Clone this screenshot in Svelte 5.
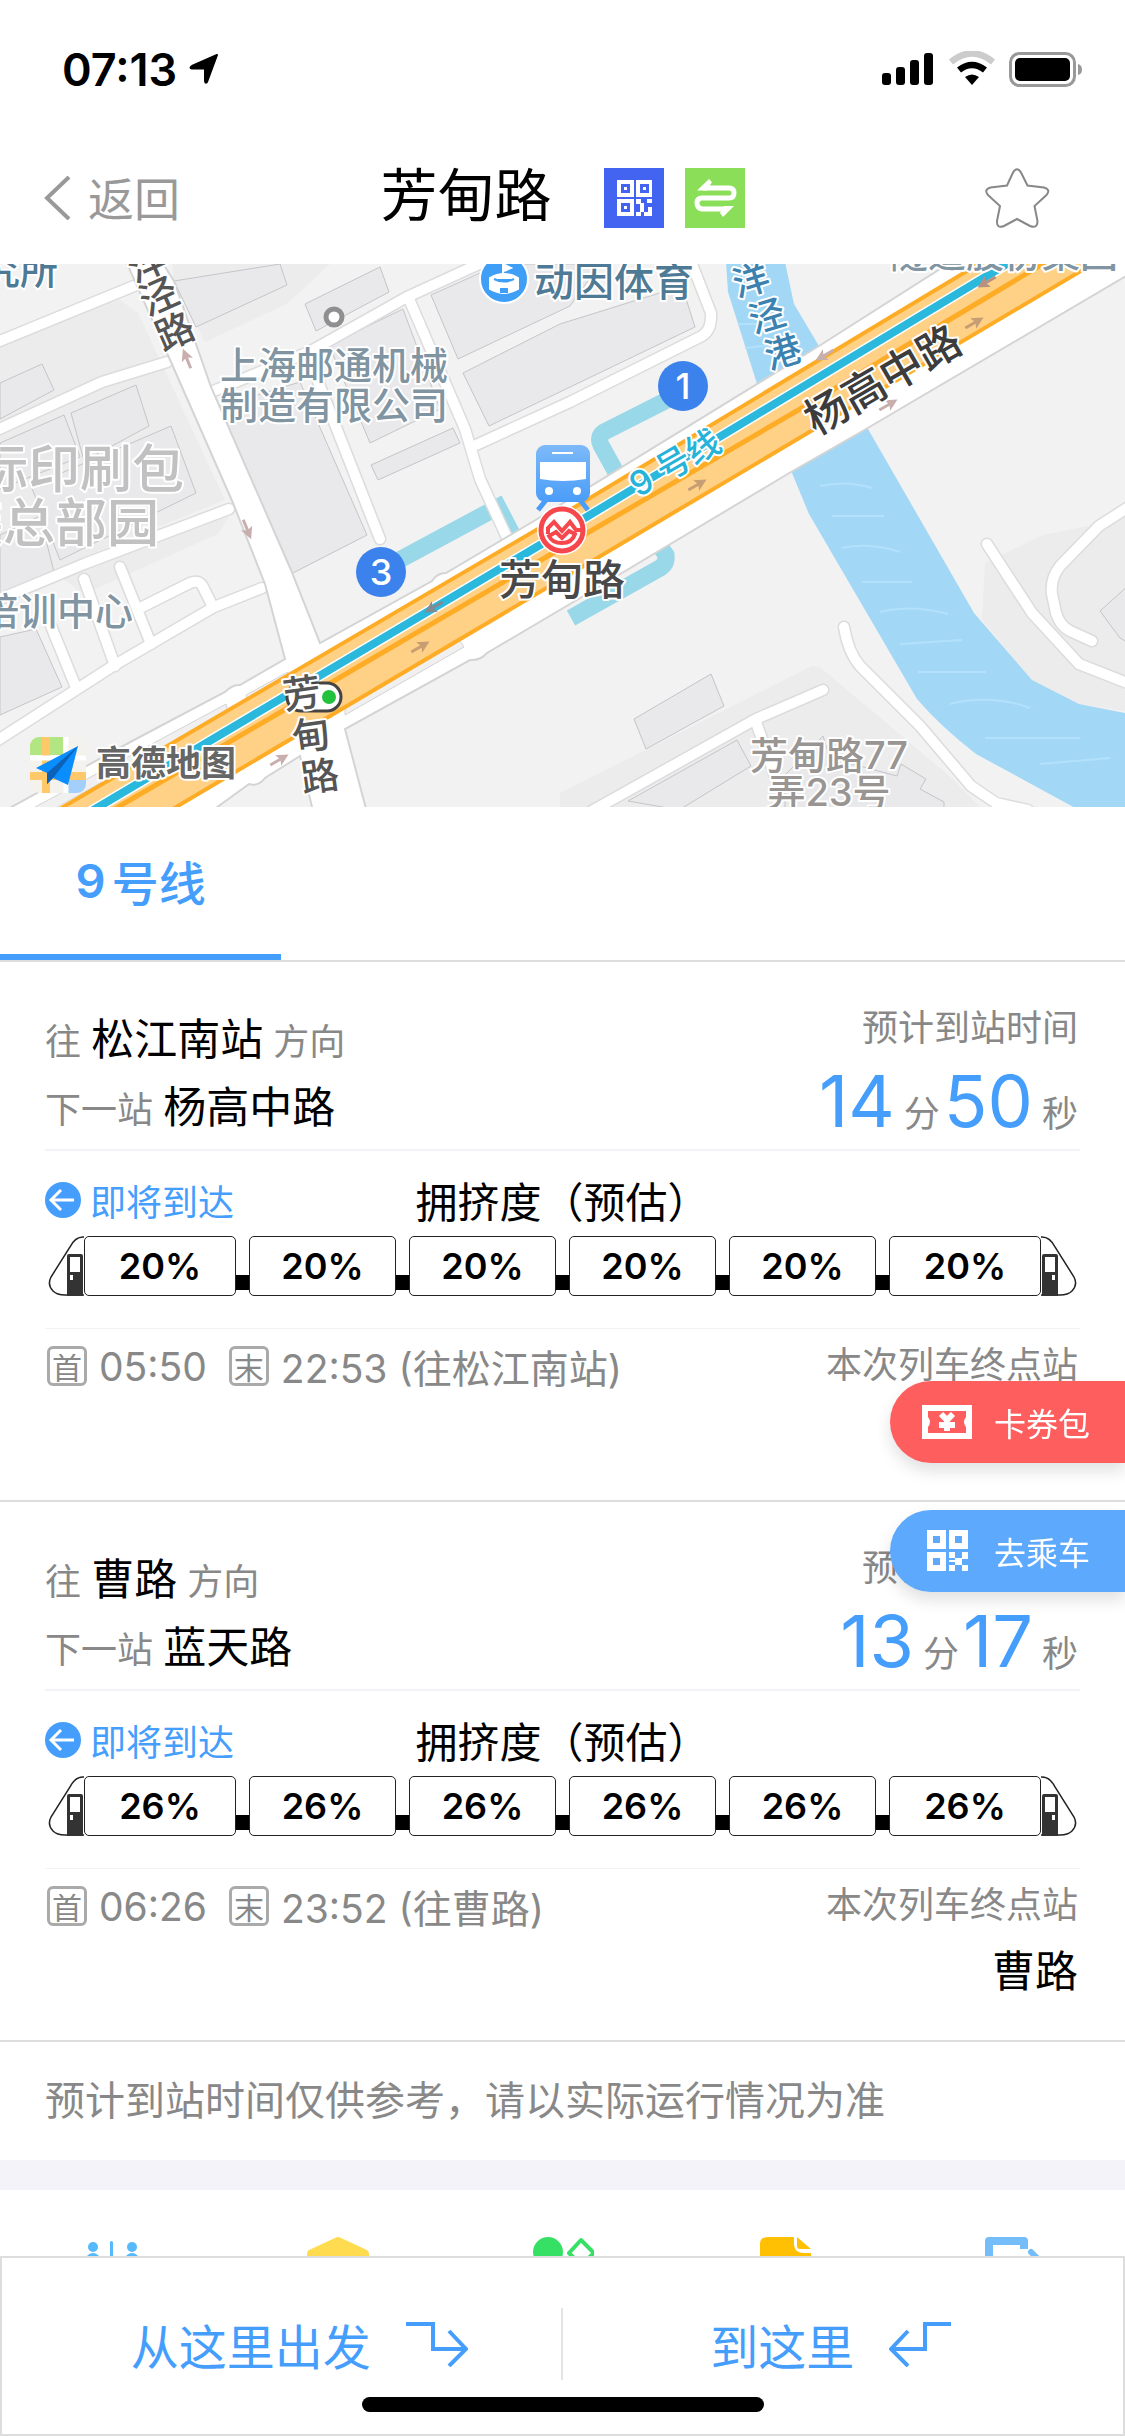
<script lang="ts">
  type Direction = {
    to: string;
    next: string;
    minutes: string;
    seconds: string;
    crowd: number[];
    first: string;
    last: string;
  };

  let starred = $state(false);
  let activeLine = $state("9");

  const lines = [{ id: "9", name: "号线" }];

  const directions: Direction[] = [
    {
      to: "松江南站",
      next: "杨高中路",
      minutes: "14",
      seconds: "50",
      crowd: [20, 20, 20, 20, 20, 20],
      first: "05:50",
      last: "22:53",
    },
    {
      to: "曹路",
      next: "蓝天路",
      minutes: "13",
      seconds: "17",
      crowd: [26, 26, 26, 26, 26, 26],
      first: "06:26",
      last: "23:52",
    },
  ];

  // map geometry, in the map's own 1125 x 543 space
  const blocks = [
    "0,72 120,36 138,49 225,236 0,327",
    "174,17 172,0 330,0 287,40 205,78",
    "60,313 229,252 218,270 84,330",
    "560,529 812,402 820,403 953,515 980,543 560,543",
    "985,299 1043,271 1093,261 1125,245 1125,447 1079,440 1032,416 982,356",
  ];

  const buildings = [
    "174,17 280,0 287,21 196,63",
    "305,40 380,3 389,28 316,67",
    "329,81 403,45 440,145 370,179",
    "371,201 453,164 460,179 378,216",
    "217,143 300,118 367,271 291,310",
    "431,31 500,0 600,0 570,42 458,95",
    "463,109 560,60 682,22 695,63 489,162",
    "0,119 42,100 54,126 0,155",
    "71,149 136,121 149,162 84,197",
    "31,222 171,162 196,229 60,296",
    "0,179 64,151 80,193 0,225",
    "0,271 40,252 54,308 0,331",
    "0,373 36,365 62,423 0,451",
    "634,455 711,410 724,442 646,485",
    "628,537 737,476 751,502 679,546",
    "823,472 785,511 785,546 944,546 944,538 920,525 926,515 901,500 897,512 830,494",
    "1100,347 1130,320 1130,380 1120,374",
  ];

  const streets = [
    "M-5 79L134 22",
    "M-5 167L102 118L167 98",
    "M-5 337L84 300L229 245",
    "M-5 478L113 402L214 343L262 324",
    "M51 362L75 421",
    "M84 315L115 402",
    "M120 303L151 380",
    "M142 343L190 319Q199 315 203 323L213 343",
    "M211 128L309 88L407 33L490 -5",
    "M316 112L380 275",
    "M409 35L465 165L480 215L509 278",
    "M476 181L570 138L702 72Q712 66 711 49L690 -5",
    "M987 280L1032 349L1079 400L1130 420",
    "M1130 242L1099 262L1060 302Q1050 315 1052 330L1056 349Q1060 362 1070 367L1092 377",
    "M844 363Q848 388 860 402L920 462L971 522L996 539L1028 546",
    "M823 426L756 455L590 548",
    "M756 458L776 515",
  ];

  const roadArrows = [
    { x: 187, y: 95, turn: -112, tone: "#c9aeae" },
    { x: 247, y: 265, turn: 68, tone: "#c9aeae" },
    { x: 434, y: 343, turn: 150, tone: "#86888f" },
    { x: 420, y: 383, turn: -30, tone: "#c79d73" },
    { x: 279, y: 496, turn: -30, tone: "#c9aeae" },
    { x: 825, y: 91, turn: 150, tone: "#c9aeae" },
    { x: 888, y: 141, turn: -30, tone: "#c9aeae" },
    { x: 697, y: 221, turn: -30, tone: "#c79d73" },
    { x: 974, y: 59, turn: -30, tone: "#c79d73" },
    { x: 987, y: 18, turn: 150, tone: "#b98f80" },
  ];

  const exits = [
    { no: 1, x: 683, y: 122 },
    { no: 3, x: 381, y: 308 },
  ];
</script>

{#snippet qr()}
  <path
    fill-rule="evenodd"
    d="M0 0H19V19H0ZM6 6V13H13V6ZM22 0H41V19H22ZM28 6V13H35V6ZM0 22H19V41H0ZM6 28V35H13V28Z"
  />
  <path d="M22 22H28V28H22ZM35 22H41V29H35ZM28 28H35V35H28ZM22 35H28V41H22ZM22 30H28V32H22ZM35 35H41V41H35Z" />
{/snippet}

{#snippet nose()}
  <svg class="nose" viewBox="0 0 36 60" aria-hidden="true">
    <path d="M36 1H35Q27 1 22 11L3 41Q-1 49 5 55Q9 59 17 59H36" fill="#fff" stroke="#222" stroke-width="1.500" />
    <path
      d="M19 60V20Q19 18 21 18H33Q35 18 35 20V60ZM22 21V36H32V21ZM22 39V44H25V39Z"
      fill="#333"
      fill-rule="evenodd"
    />
  </svg>
{/snippet}

<div class="page">
  <div class="status">
    <span class="clock">07:13</span>
    <svg class="locate" width="30" height="30" viewBox="0 0 30 30">
      <path d="M28 1L18 28Q16 30 16 26V14.500H3Q0 14 3 12Z" stroke="#000" stroke-width="2" stroke-linejoin="round" />
    </svg>
    <svg class="signals" width="202" height="36" viewBox="0 0 202 36">
      <rect x="0" y="22" width="9" height="12" rx="3" />
      <rect x="14" y="16" width="9" height="18" rx="3" />
      <rect x="28" y="9" width="9" height="25" rx="3" />
      <rect x="42" y="2" width="9" height="32" rx="3" />
      <path d="M69 11Q90 -6 111 11" fill="none" stroke="#ccc" stroke-width="6.500" />
      <path d="M77 19Q90 9 103 19" fill="none" stroke="#000" stroke-width="6.500" />
      <path d="M83 26Q90 21 97 26L90 34Z" />
      <rect x="128.500" y="2.500" width="64" height="32" rx="9" fill="none" stroke="#999" stroke-width="3" />
      <rect x="133" y="7" width="55" height="23" rx="5" />
      <path d="M196 13Q200 14 200 18.500T196 24Z" fill="#999" />
    </svg>
  </div>

  <header class="nav">
    <button class="back">
      <svg width="28" height="44" viewBox="0 0 28 44"><path d="M26 1L4 22L26 43" /></svg>
      <span>返回</span>
    </button>
    <div class="title">
      <h1>芳甸路</h1>
      <button aria-label="乘车码">
        <svg width="60" height="60" viewBox="0 0 60 60">
          <rect width="60" height="60" fill="#4264f0" />
          <g fill="#fff">
            <rect x="13" y="12" width="17" height="17" />
            <rect x="32" y="12" width="16" height="17" />
            <rect x="13" y="31" width="17" height="17" />
            <path d="M32 31h5v4h3v9h-3v4h-5v-4h4v-8h-4zM43 31h5v4h-5zM44 39h4v9h-8v-4h4z" />
          </g>
          <g fill="#fff" stroke="#4264f0" stroke-width="3">
            <rect x="18.500" y="17.500" width="6" height="6" />
            <rect x="37.500" y="17.500" width="6" height="6" />
            <rect x="18.500" y="36.500" width="6" height="6" />
          </g>
        </svg>
      </button>
      <button aria-label="换乘">
        <svg width="60" height="60" viewBox="0 0 60 60">
          <rect width="60" height="60" fill="#8ade58" />
          <path d="M18 20H44Q49 20 49 25T44 30H17Q12 30 12 35T17 41H43" fill="none" stroke="#fff" stroke-width="5" />
          <path d="M12 22.500L24 11L27 14L22 22.500ZM49 38L38 49L35 45L39 38Z" fill="#fff" />
        </svg>
      </button>
    </div>
    <button class="star" class:starred aria-label="收藏" onclick={() => (starred = !starred)}>
      <svg width="65" height="62" viewBox="-1 -1 65 62">
        <path
          d="M27 4.500Q31 -2 35 4.500L41.500 17.500L58 19.500Q65 21.500 60.500 27L48.500 38L51.500 53Q51.500 61 44 58L31 51L18 58Q10.500 61 11 53L14 38L2 27Q-2.500 21.500 4.500 19.500L21 17.500Z"
        />
      </svg>
    </button>
  </header>

  <svg class="map" viewBox="0 0 1125 543" preserveAspectRatio="xMidYMid slice" role="img" aria-label="芳甸路站周边地图">
    <defs>
      <linearGradient id="bus" x1="0" y1="0" x2="0" y2="1">
        <stop offset="0" stop-color="#7db9f8" />
        <stop offset="1" stop-color="#4a9df8" />
      </linearGradient>
    </defs>

    <rect width="1125" height="543" fill="#f2f2f2" />
    {#each blocks as points}
      <polygon {points} fill="#edecec" />
    {/each}
    {#each buildings as points}
      <polygon {points} fill="#e9e9eb" stroke="#c4c5c8" />
    {/each}

    <path
      fill="#a2d8f6"
      d="M726 -2L728 28L758 123L792 209L809 250L917 435Q940 462 976 490L1079 546H1125V449L1079 440L1032 416L974 349L868 165L819 82L794 40L785 -2Z"
    />
    <g fill="none" stroke="#b3e0fb" stroke-width="2">
      <path d="M738 60H766M745 84L784 80M820 222Q846 216 872 224M832 252H884M842 284Q870 278 900 288" />
      <path d="M862 318H912M880 348Q912 340 948 350M900 380L962 376M918 408H986M950 440Q990 430 1030 444M985 474H1080M1040 500L1110 494" />
    </g>

    <g fill="none" stroke="#98d8e8" stroke-width="17">
      <path d="M390 301L498 243L512 270" />
      <path d="M675 132L604 168Q597 173 601 181L618 212" />
      <path d="M650 268L666 291Q667 300 660 304L571 354" />
    </g>

    <g class="road-edge">
      {#each streets as d}
        <path {d} />
      {/each}
    </g>
    <g class="road">
      {#each streets as d}
        <path {d} />
      {/each}
    </g>

    <path
      d="M-5 552L134 476L225 428Q233 420 240 421L285 395L265 320L233 239L171 98L125 -5H160L174 17L211 123L291 306L320 379L432 317Q437 309 446 309L534 257L819 82L951 -2H1150L866 165L791 208L570 340L487 389Q480 397 470 396L345 465L370 560H316L300 492L265 514Q258 523 249 520L205 552Z"
      fill="#fff"
      stroke="#d4d4d4"
      stroke-width="2"
    />
    <path d="M246 431L288 408L288 414L248 438ZM345 443L460 377L464 383L345 451ZM0 562L226 440L228 448L34 556Z" fill="#f0f0f0" stroke="#d4d4d4" />

    <path d="M58 546L560 252L982 -2H1093L582 303L171 546Z" fill="#fed186" />
    <g fill="none" stroke="#feac26" stroke-width="4">
      <path d="M58 546L560 252L982 -2M171 546L582 303L1096 -2" />
      <path d="M113 546L291 442L589 268L819 134L949 56L1046 -2" stroke-width="5" />
    </g>
    <path d="M90 548L540 281L1010 -2" fill="none" stroke="#fff" stroke-width="11" />
    <path d="M90 548L540 281L1010 -2" fill="none" stroke="#2ab8dc" stroke-width="8" />

    {#each roadArrows as arrow}
      <path
        d="M-10 -1.500H1L-1 -6L11 0L-1 6L1 1.500H-10Z"
        fill={arrow.tone}
        transform="translate({arrow.x} {arrow.y}) rotate({arrow.turn})"
      />
    {/each}

    <circle cx="334" cy="53" r="8" fill="#fff" stroke="#8f8f8f" stroke-width="5" />
    <rect x="287" y="419" width="54" height="28" rx="14" fill="#fff" stroke="#444" stroke-width="3" />
    <circle cx="329" cy="433" r="7" fill="#22c23c" />

    <circle cx="504" cy="15" r="24" fill="#3f9ef5" stroke="#fff" stroke-width="2" />
    <path
      d="M490 14Q504 6 518 14V25Q504 33 490 25ZM503 10V0L511 4L504 7"
      fill="#fff"
      stroke="#fff"
      stroke-width="2"
    />
    <path d="M494 15Q504 20 514 15M501 29V25H507V29" fill="#3f9ef5" stroke="#3f9ef5" stroke-width="2" />

    <g class="labels">
      <text x="58" y="20" class="poi deep end">究所</text>
      <text x="334" y="115" class="poi mid">上海邮通机械</text>
      <text x="334" y="155" class="poi mid">制造有限公司</text>
      <text x="184" y="224" class="area end">标印刷包</text>
      <text x="159" y="278" class="area end">装总部园</text>
      <text x="133" y="361" class="poi end">培训中心</text>
      <text x="614" y="32" class="sport mid">动因体育</text>
      <text x="1004" y="3" class="poi mid">隧道股份集团</text>
      <text x="829" y="505" class="estate mid">芳甸路77</text>
      <text x="829" y="542" class="estate mid">弄23号</text>

      <g class="street">
        <text transform="translate(147 0) rotate(-24)" y="13">洋</text>
        <text transform="translate(159 33) rotate(-24)" y="13">泾</text>
        <text transform="translate(175 68) rotate(-24)" y="13">路</text>
        <text transform="translate(302 430) rotate(-8)" y="13">芳</text>
        <text transform="translate(311 472) rotate(-8)" y="13">甸</text>
        <text transform="translate(320 513) rotate(-8)" y="13">路</text>
      </g>
      <g class="canal">
        <text transform="translate(751 16) rotate(-17)" y="13">洋</text>
        <text transform="translate(767 52) rotate(-17)" y="13">泾</text>
        <text transform="translate(783 88) rotate(-17)" y="13">港</text>
      </g>
      <text class="avenue" transform="translate(883 116) rotate(-30)" y="15">杨高中路</text>
      <text class="metro-line" transform="translate(675 199) rotate(-30)" y="12">9 号线</text>
    </g>

    <path d="M546 236L538 246M580 236L588 246" stroke="#4a9df8" stroke-width="5" />
    <rect x="536" y="181" width="54" height="57" rx="9" fill="url(#bus)" />
    <path d="M552 189H573" stroke="#fff" stroke-width="2" />
    <path d="M540 198H586V215Q563 219 540 215Z" fill="#fff" />
    <circle cx="549" cy="227" r="4" fill="#fff" />
    <circle cx="577" cy="227" r="4" fill="#fff" />

    <circle cx="562" cy="266" r="25" fill="#fff" />
    <circle cx="562" cy="266" r="21" fill="none" stroke="#f5474c" stroke-width="5" />
    <path
      d="M548 270V264L554 258L562 267L570 258L576 266H582M575 270Q572 279 562 279Q552 279 549 272L556 268L562 274L569 267Z"
      fill="none"
      stroke="#f5474c"
      stroke-width="4"
    />
    <text x="562" y="331" class="station">芳甸路</text>

    {#each exits as exit}
      <circle cx={exit.x} cy={exit.y} r="25" fill="#3c82ec" />
      <text x={exit.x} y={exit.y + 13} class="exit">{exit.no}</text>
    {/each}

    <g>
      <clipPath id="amap"><rect x="30" y="473" width="56" height="56" rx="9" /></clipPath>
      <g clip-path="url(#amap)">
        <rect x="30" y="473" width="56" height="56" fill="#f4f2ec" />
        <path d="M30 473H63V491H30Z" fill="#b2e683" />
        <path d="M68 513H86V529H68Z" fill="#a3cffa" />
        <path d="M46 473V529M30 512H86" stroke="#ffc96a" stroke-width="8" />
        <path d="M30 494H86M66 473V529" stroke="#fff" stroke-width="5" />
      </g>
      <path d="M78 482L36 504L47 509V520L53 514L68 521Z" fill="#0a8dff" />
      <path d="M78 482L47 509V520L53 514Z" fill="#0b62b8" />
      <text x="96" y="512" class="brand">高德地图</text>
    </g>
  </svg>

  <nav class="tabs">
    {#each lines as line}
      <button class:active={activeLine === line.id} onclick={() => (activeLine = line.id)}>
        <span>{line.id}</span>{line.name}
      </button>
    {/each}
  </nav>

  {#each directions as dir}
    <section class="direction">
      <div class="head">
        <div class="route">
          <p>往 <strong>{dir.to}</strong> 方向</p>
          <p>下一站 <strong>{dir.next}</strong></p>
        </div>
        <div class="eta">
          <p>预计到站时间</p>
          <p class="countdown"><b>{dir.minutes}</b><span>分</span><b>{dir.seconds}</b><span>秒</span></p>
        </div>
      </div>

      <div class="crowd">
        <div class="crowd-title">
          <span class="arriving">
            <svg width="36" height="36" viewBox="0 0 36 36">
              <circle cx="18" cy="18" r="18" fill="#459efc" />
              <path d="M29 18H6M16 8L6 18L16 28" />
            </svg>
            即将到达
          </span>
          <h2>拥挤度（预估）</h2>
        </div>
        <div class="train">
          {@render nose()}
          {#each dir.crowd as load, i}
            {#if i > 0}<i class="coupler"></i>{/if}
            <span class="car">{load}%</span>
          {/each}
          <span class="tail">{@render nose()}</span>
        </div>
      </div>

      <div class="foot">
        <p class="times">
          <span class="badge first">首</span>
          <span>{dir.first}</span>
          <span class="badge last">末</span>
          <span>{dir.last} (往{dir.to})</span>
        </p>
        <div class="terminal">
          <p>本次列车终点站</p>
          <strong>{dir.to}</strong>
        </div>
      </div>
    </section>
  {/each}

  <p class="notice">预计到站时间仅供参考，请以实际运行情况为准</p>

  <div class="facilities">
    <svg viewBox="0 0 62 62" fill="#56b9fb">
      <circle cx="11" cy="10" r="5" /><circle cx="50" cy="10" r="5" />
      <path d="M4 20Q11 12 18 20V40H4ZM43 20Q50 12 57 20V40H43ZM28 5Q29 3 31 5V58H28Z" />
    </svg>
    <svg viewBox="0 0 62 62" fill="#ffdb50">
      <path d="M28 1Q31 -1 34 1L60 13Q62 14 62 17V58H0V17Q0 14 2 13Z" />
    </svg>
    <svg viewBox="0 0 62 62" fill="#36e065">
      <circle cx="16" cy="15" r="15" />
      <path d="M49 3L62 16L49 28L37 16Z" fill="none" stroke="#36e065" stroke-width="4" stroke-linejoin="round" />
    </svg>
    <svg viewBox="0 0 62 62" fill="#ffc003">
      <path d="M3 7Q3 0 11 0H37V8Q38 16 47 16H54V60H3Z" />
      <path d="M40 0L54 12H43Q40 12 40 9Z" />
    </svg>
    <svg viewBox="0 0 62 62" fill="none" stroke="#74bdf9" stroke-width="8">
      <path d="M7 60V4H42V12" stroke-linejoin="round" />
      <path d="M49 15L62 28" stroke-width="6" stroke-linecap="round" />
    </svg>
  </div>

  <div class="floating">
    <button class="wallet">
      <svg width="50" height="34" viewBox="0 0 50 34">
        <path
          fill="#fff"
          fill-rule="evenodd"
          d="M0 0H50V34H0ZM6 6V12Q10 17 6 22V28H44V22Q40 17 44 12V6Z"
        />
        <path d="M19 9L25 15L31 9M25 13V26M17 20H33" fill="none" stroke="#fff" stroke-width="6" />
      </svg>
      卡券包
    </button>
    <button class="ride">
      <svg width="50" height="42" viewBox="-5 0 50 42" fill="#fff">{@render qr()}</svg>
      去乘车
    </button>
  </div>

  <footer class="actions">
    <button>
      从这里出发
      <svg width="62" height="46" viewBox="0 0 62 46"><path d="M0 3H27V28H59M43 10L60 28L43 45" /></svg>
    </button>
    <button>
      到这里
      <svg width="62" height="46" viewBox="0 0 62 46"><path d="M62 3H36V28H3M19 10L2 28L19 45" /></svg>
    </button>
    <i class="home"></i>
  </footer>
</div>

<style>
  :global(body) {
    background: #fff;
  }

  .page {
    --blue: #459efc;
    --gray: #888;
    position: relative;
    min-height: 100vh;
    overflow: hidden;
    font-family: Inter, "Noto Sans CJK SC", sans-serif;
    font-size: 36px;
    color: #000;
  }

  .page,
  .page * {
    box-sizing: border-box;
  }

  p,
  h1,
  h2 {
    margin: 0;
    font-weight: 400;
  }

  strong,
  b {
    font-weight: 400;
  }

  svg {
    flex: none;
  }

  button {
    display: flex;
    align-items: center;
    padding: 0;
    border: 0;
    background: none;
    color: inherit;
    font: inherit;
    cursor: pointer;
  }

  .status {
    display: flex;
    align-items: center;
    height: 132px;
    padding: 6px 41px 0 62px;
  }

  .clock {
    font-size: 45px;
    font-weight: 600;
  }

  .locate {
    margin-left: 12px;
  }

  .signals {
    margin-left: auto;
  }

  .nav {
    display: grid;
    grid-template-columns: 1fr auto 1fr;
    align-items: center;
    height: 132px;
    padding: 0 75px 0 43px;
  }

  .back {
    gap: 17px;
    font-size: 46px;
    color: #999;
  }

  .back span,
  h1 {
    padding-bottom: 4px;
  }

  .back path {
    fill: none;
    stroke: #999;
    stroke-width: 4;
  }

  .title {
    display: flex;
    align-items: center;
    gap: 21px;
    margin-left: 32px;
  }

  h1 {
    margin-right: 31px;
    font-size: 57px;
    line-height: 72px;
  }

  .star {
    justify-self: end;
  }

  .star path {
    fill: none;
    stroke: #888;
    stroke-width: 2;
  }

  .starred path {
    fill: #ffc003;
  }

  .map {
    display: block;
    width: 100%;
    height: 543px;
  }

  .road-edge path,
  .road path {
    fill: none;
    stroke: #dcdcdc;
    stroke-width: 13;
    stroke-linecap: round;
    stroke-linejoin: round;
  }

  .road path {
    stroke: #fff;
    stroke-width: 10;
  }

  .map text {
    font-weight: 500;
    paint-order: stroke;
    stroke: #fff;
    stroke-width: 4;
    stroke-linejoin: round;
  }

  .map .mid {
    text-anchor: middle;
  }

  .map .end {
    text-anchor: end;
  }

  .poi {
    font-size: 38px;
    fill: #8094a1;
  }

  .poi.deep,
  .sport {
    fill: #4f7a95;
  }

  .sport {
    font-size: 40px;
  }

  .area {
    font-size: 52px;
    fill: #c1c1c1;
  }

  .estate {
    font-size: 38px;
    fill: #999593;
  }

  .street text,
  .canal text {
    font-size: 38px;
    fill: #555;
    text-anchor: middle;
  }

  .canal text {
    font-size: 36px;
    fill: #3b82b0;
  }

  .map .avenue {
    font-size: 43px;
    fill: #3c3c3c;
    text-anchor: middle;
  }

  .map .metro-line {
    font-size: 34px;
    fill: #26b3da;
    text-anchor: middle;
  }

  .map .station {
    font-size: 42px;
    fill: #484848;
    text-anchor: middle;
  }

  .map .exit {
    font-size: 36px;
    fill: #fff;
    stroke: none;
    text-anchor: middle;
  }

  .map .brand {
    font-size: 35px;
    font-weight: 700;
    fill: #666;
  }

  .tabs {
    display: flex;
    height: 155px;
    border-bottom: 2px solid #ddd;
  }

  .tabs button {
    justify-content: center;
    width: 25%;
    border-bottom: 6px solid transparent;
    font-size: 47px;
    font-weight: 500;
  }

  .tabs span {
    margin-right: 6px;
    font-weight: 600;
  }

  .tabs .active {
    border-color: var(--blue);
    color: var(--blue);
  }

  .direction {
    height: 540px;
    padding: 0 45px;
    border-bottom: 2px solid #ddd;
    color: var(--gray);
  }

  .direction strong {
    font-size: 43px;
    color: #000;
  }

  .head {
    display: flex;
    justify-content: space-between;
    height: 189px;
    border-bottom: 2px solid #f2f2f8;
  }

  .route {
    padding-top: 45px;
    line-height: 65px;
  }

  .eta {
    padding: 42px 2px 0 0;
    line-height: 48px;
    text-align: right;
  }

  .countdown {
    display: flex;
    align-items: baseline;
    justify-content: flex-end;
    line-height: 98px;
  }

  .countdown b {
    font-size: 72px;
    color: var(--blue);
  }

  .countdown span {
    margin: 0 4px 0 9px;
  }

  .countdown span:last-child {
    margin-right: 0;
  }

  .crowd {
    height: 178px;
    border-bottom: 1px solid #f2f2f5;
  }

  .crowd-title {
    display: grid;
    grid-template-columns: 1fr auto 1fr;
    align-items: center;
    height: 85px;
    padding-top: 12px;
  }

  .arriving {
    display: flex;
    align-items: center;
    gap: 9px;
    color: var(--blue);
  }

  .arriving path {
    fill: none;
    stroke: #fff;
    stroke-width: 3;
  }

  h2 {
    font-size: 42px;
    color: #000;
  }

  .train {
    display: flex;
    height: 60px;
    padding: 0 3px;
  }

  .nose {
    display: block;
    width: 36px;
    height: 60px;
  }

  .tail {
    transform: scaleX(-1);
  }

  .car {
    display: flex;
    flex: 1 1 10px;
    align-items: center;
    justify-content: center;
    border: 1px solid #222;
    border-radius: 5px;
    color: #000;
    font-weight: 600;
  }

  .nose + .car,
  .car:nth-last-child(2) {
    flex-basis: 15px;
  }

  .coupler {
    width: 13px;
    height: 15px;
    margin-top: 39px;
    background: #000;
  }

  .foot {
    display: flex;
    justify-content: space-between;
    padding: 0 2px;
  }

  .times {
    display: flex;
    align-items: center;
    height: 74px;
    font-size: 39px;
  }

  .badge {
    display: flex;
    align-items: center;
    justify-content: center;
    width: 40px;
    height: 40px;
    margin-right: 12px;
    border: 3px solid #aaa;
    border-radius: 6px;
    font-size: 30px;
  }

  .badge.last {
    margin-left: 22px;
  }

  .terminal {
    display: flex;
    flex-direction: column;
    align-items: flex-end;
    line-height: 72px;
  }

  .terminal strong {
    line-height: 60px;
  }

  .notice {
    height: 148px;
    border-bottom: 30px solid #f4f3f9;
    padding-left: 45px;
    font-size: 40px;
    line-height: 118px;
    color: var(--gray);
  }

  .facilities {
    display: grid;
    grid-template-columns: repeat(5, 1fr);
    justify-items: center;
    padding-top: 47px;
  }

  .facilities svg {
    width: 62px;
    height: 62px;
  }

  .floating {
    position: fixed;
    right: 0;
    bottom: 844px;
    display: grid;
    gap: 47px;
  }

  .floating button {
    gap: 22px;
    width: 235px;
    height: 82px;
    padding-left: 32px;
    border-radius: 41px 0 0 41px;
    color: #fff;
    font-size: 32px;
    box-shadow: 0 8px 16px rgb(0 0 0 / 12%);
  }

  .wallet {
    background: #fe5e5e;
  }

  .ride {
    background: #5da9fd;
  }

  .actions {
    position: fixed;
    right: 0;
    bottom: 0;
    left: 0;
    display: grid;
    grid-template-columns: 1fr 1fr;
    align-items: center;
    height: 180px;
    padding-bottom: 4px;
    border: 2px solid #ddd;
    background: #fff;
  }

  .actions button {
    justify-content: center;
    gap: 35px;
    height: 72px;
    color: var(--blue);
    font-size: 48px;
  }

  .actions button:first-child {
    padding-left: 36px;
    border-right: 2px solid #e4e4e4;
  }

  .actions button:nth-child(2) {
    padding-right: 24px;
  }

  .actions path {
    fill: none;
    stroke: var(--blue);
    stroke-width: 4;
  }

  .home {
    position: absolute;
    bottom: 22px;
    left: 50%;
    width: 402px;
    height: 15px;
    border-radius: 8px;
    background: #000;
    transform: translateX(-50%);
  }
</style>
